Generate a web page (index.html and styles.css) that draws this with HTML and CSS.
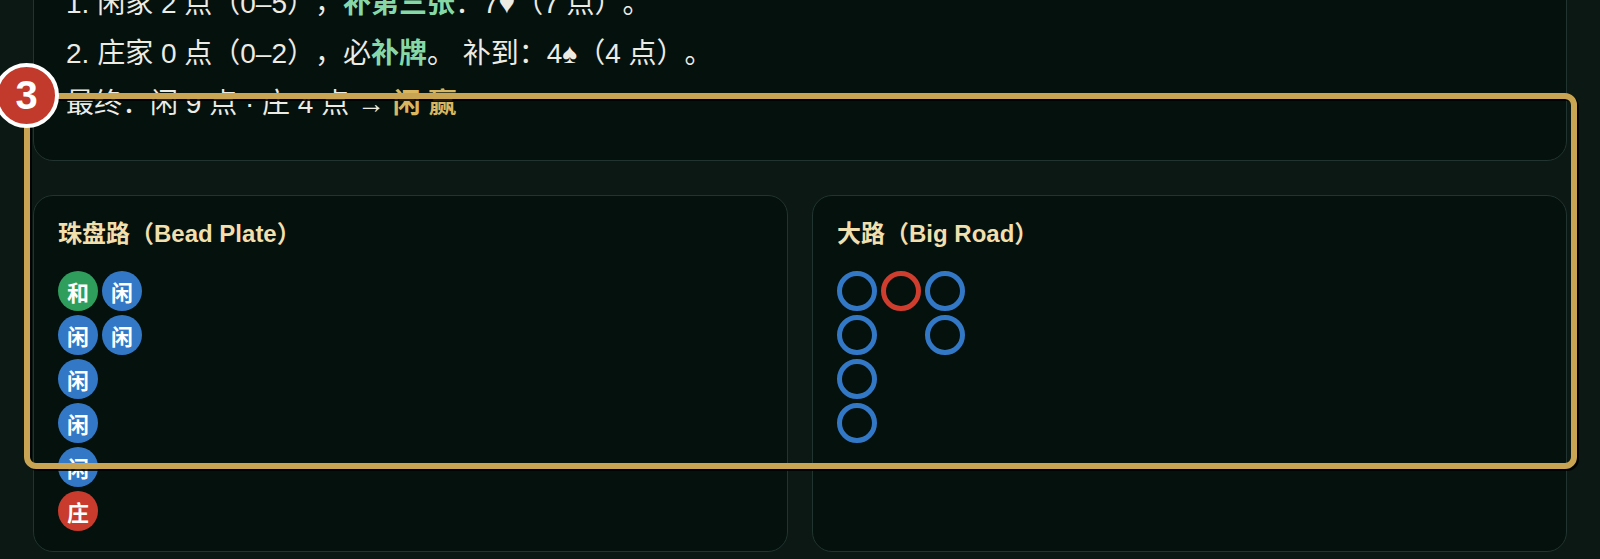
FILE: index.html
```html
<!DOCTYPE html>
<html lang="zh-CN">
<head>
    <meta charset="UTF-8">
    <meta name="viewport" content="width=device-width, initial-scale=1.0">
    <title>百家乐 补牌演示</title>
    <link rel="stylesheet" href="styles.css">
</head>
<body>
    <div class="page">
        <section class="card steps">
            <p class="step">1. 闲家 2 点（0–5），<b class="hl">补第三张</b>：7♥（7 点）。</p>
            <p class="step">2. 庄家 0 点（0–2），必<b class="hl">补牌</b>。 补到：4♠（4 点）。</p>
            <p class="step">最终：闲 9 点 · 庄 4 点 → <b class="win">闲 赢</b></p>
        </section>

        <div class="roads">
            <section class="card road">
                <h3 class="road-title">珠盘路（Bead Plate）</h3>
                <div class="bead-grid">
                    <span class="bead tie">和</span>
                    <span class="bead player">闲</span>
                    <span class="bead player">闲</span>
                    <span class="bead player">闲</span>
                    <span class="bead player">闲</span>
                    <span class="bead banker">庄</span>
                    <span class="bead player">闲</span>
                    <span class="bead player">闲</span>
                </div>
            </section>
            <section class="card road">
                <h3 class="road-title">大路（Big Road）</h3>
                <div class="big-road">
                    <div class="big-col">
                        <span class="ring player"></span>
                        <span class="ring player"></span>
                        <span class="ring player"></span>
                        <span class="ring player"></span>
                    </div>
                    <div class="big-col">
                        <span class="ring banker"></span>
                    </div>
                    <div class="big-col">
                        <span class="ring player"></span>
                        <span class="ring player"></span>
                    </div>
                </div>
            </section>
        </div>
    </div>

    <!-- 引导高亮框 -->
    <div class="focus">
        <span class="badge">3</span>
    </div>
</body>
</html>
```

FILE: styles.css
```css
html, body {
    margin: 0;
    padding: 0;
}
body {
    background: #0b1814;
    color: #ecebe4;
    font-family: "Liberation Sans", "Noto Sans CJK SC", sans-serif;
    text-spacing-trim: space-all;
    overflow: hidden;
}
.page {
    padding: 0 33px;
}
.card {
    background: #04110d;
    border: 1px solid #223430;
    border-radius: 20px;
}
.steps {
    margin-top: -48px;
    padding: 32px 32px 25px;
}
.step {
    margin: 0 0 12px;
    font-size: 28px;
    line-height: 38px;
    white-space: nowrap;
}
.hl {
    color: #86d9a6;
}
.win {
    color: #d9b660;
}
.roads {
    margin-top: 34px;
    display: grid;
    grid-template-columns: 1fr 1fr;
    gap: 24px;
}
.road {
    padding: 23px 24px 20px;
}
.road-title {
    margin: 0 0 23px;
    font-size: 24px;
    line-height: 29px;
    color: #f1dfae;
}
.bead-grid {
    display: grid;
    grid-auto-flow: column;
    grid-template-rows: repeat(6, 40px);
    grid-auto-columns: 40px;
    gap: 4px;
}
.bead {
    width: 40px;
    height: 40px;
    border-radius: 50%;
    display: flex;
    align-items: center;
    justify-content: center;
    color: #ffffff;
    font-size: 22px;
    font-weight: bold;
}
.bead.tie {
    background: #2f9e5c;
}
.bead.player {
    background: #3378c6;
}
.bead.banker {
    background: #c93b2d;
}
.big-road {
    display: flex;
    gap: 4px;
    height: 260px;
}
.big-col {
    display: flex;
    flex-direction: column;
    gap: 4px;
}
.ring {
    width: 40px;
    height: 40px;
    box-sizing: border-box;
    border-radius: 50%;
    border: 5px solid #3378c6;
}
.ring.banker {
    border-color: #cf3d2e;
}
.focus {
    position: absolute;
    left: 24px;
    top: 93px;
    width: 1553px;
    height: 376px;
    box-sizing: border-box;
    border: 6px solid #c9a452;
    border-radius: 12px;
    box-shadow: 2px 2px 0 rgba(0, 0, 0, 0.85), inset 2px 2px 0 rgba(0, 0, 0, 0.85);
}
.badge {
    position: absolute;
    left: -36px;
    top: -36px;
    width: 57px;
    height: 57px;
    border-radius: 50%;
    border: 4px solid #ffffff;
    background: #c23a2c;
    color: #ffffff;
    font-size: 40px;
    font-weight: bold;
    line-height: 57px;
    text-align: center;
}
```
